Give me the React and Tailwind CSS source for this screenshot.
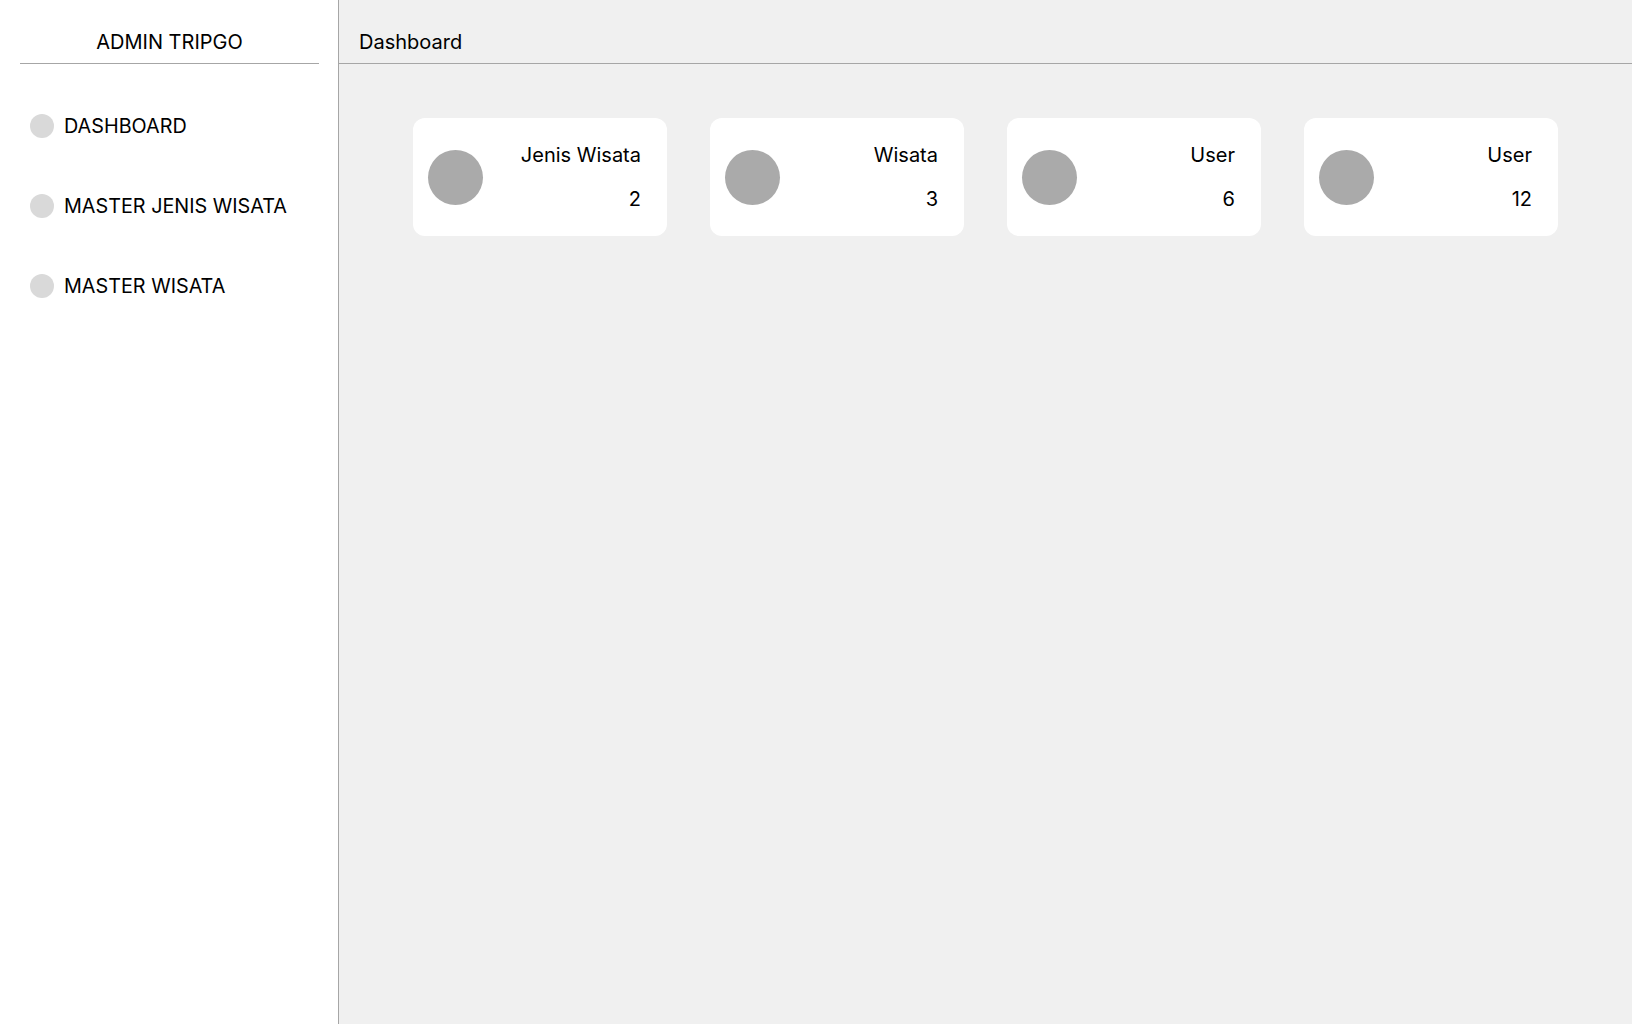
const menu = ['DASHBOARD', 'MASTER JENIS WISATA', 'MASTER WISATA'];

const stats = [
  { label: 'Jenis Wisata', value: 2 },
  { label: 'Wisata', value: 3 },
  { label: 'User', value: 6 },
  { label: 'User', value: 12 },
];

function Sidebar() {
  return (
    <aside className="w-[339px] shrink-0 bg-white border-r border-[#a6a6a6] min-h-screen">
      <div className="mx-5 mr-[19px] h-[64px] flex items-end justify-center border-b border-[#a6a6a6] pb-[9px]">
        <span className="text-[20px] leading-6 text-black">ADMIN TRIPGO</span>
      </div>
      <nav className="flex flex-col gap-[56px] pt-[50px] pl-[30px]">
        {menu.map((m) => (
          <div key={m} className="flex items-center gap-[10px] h-6">
            <span className="w-6 h-6 rounded-full bg-[#d9d9d9]" />
            <span className="text-[19.8px] leading-6 text-black">{m}</span>
          </div>
        ))}
      </nav>
    </aside>
  );
}

function StatCard({ label, value }) {
  return (
    <div className="bg-white rounded-xl h-[118px] flex items-center pl-[15px] pr-[26px]">
      <span className="w-[55px] h-[55px] rounded-full bg-[#aaaaaa] shrink-0" />
      <div className="ml-auto flex flex-col items-end gap-[20px] text-[20px] leading-6 text-black">
        <span>{label}</span>
        <span>{value}</span>
      </div>
    </div>
  );
}

export default function App() {
  return (
    <div className="flex min-h-screen bg-[#f0f0f0]" style={{ fontFamily: 'Inter, "Noto Sans", sans-serif' }}>
      <Sidebar />
      <main className="flex-1">
        <div className="h-[64px] flex items-end border-b border-[#a6a6a6] pl-5 pb-[9px]">
          <span className="text-[20px] leading-6 text-black">Dashboard</span>
        </div>
        <div className="grid grid-cols-4 gap-[43px] px-[74px] pt-[54px]">
          {stats.map((s, i) => (
            <StatCard key={i} {...s} />
          ))}
        </div>
      </main>
    </div>
  );
}
